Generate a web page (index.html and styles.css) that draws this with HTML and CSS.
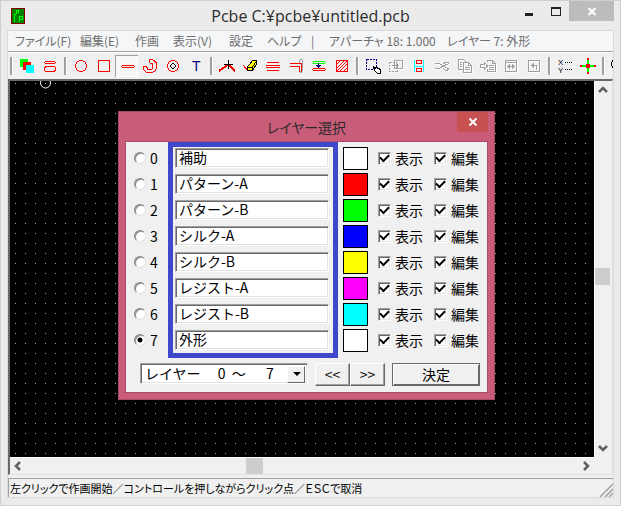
FILE: index.html
```
<!DOCTYPE html>
<html lang="ja">
<head>
<meta charset="utf-8">
<title>Pcbe C:¥pcbe¥untitled.pcb</title>
<link rel="stylesheet" href="styles.css">
</head>
<body>
<div class="window">
  <header class="titlebar">
    <svg class="app-icon" width="14" height="16" viewBox="0 0 14 16" shape-rendering="crispEdges"><rect width="14" height="16" fill="#800000"/><rect x="1" y="1" width="12" height="14" fill="#008000"/><path d="M3.500 14V6.500M3 6.500h2M5.500 6V3M5 2.500h3M7.500 2v3M8.500 14V8M8 8.500h4M11.500 8v3M8 11.500h4" fill="none" stroke="#0f0"/></svg>
    <h1 class="title">Pcbe C:¥pcbe¥untitled.pcb</h1>
    <div class="caption">
      <button class="cap" aria-label="最小化"><svg width="12" height="20" viewBox="0 0 12 20"><path d="M2 12h8v3H2z" fill="#222"/></svg></button>
      <button class="cap" aria-label="最大化"><svg width="12" height="20" viewBox="0 0 12 20"><path d="M1 6h10v9H1zM2 8v6h8V8z" fill="#222" fill-rule="evenodd"/></svg></button>
      <button class="cap cap-close" aria-label="閉じる"><svg width="12" height="20" viewBox="0 0 12 20"><path d="M2.500 7l7 7M9.500 7l-7 7" stroke="#fff" stroke-width="2"/></svg></button>
    </div>
  </header>
  <div class="client">
    <nav class="menu">
      <button>ファイル(F)</button><button>編集(E)</button><button>作画</button><button>表示(V)</button><button>設定</button><button>ヘルプ</button><span>|</span><span>アパーチャ 18: 1.000</span><span>レイヤー 7: 外形</span>
    </nav>
    <div class="toolbar">
      <i class="sep"></i>
      <button aria-label="レイヤー"><svg viewBox="0 0 23 22"><path d="M5 4h8v8H5z" fill="#0f0"/><path d="M8 7h8v8H8z" fill="red"/><path d="M11 10h8v8h-8z" fill="#0ff"/></svg></button>
      <button aria-label="アパーチャ"><svg viewBox="0 0 23 22"><g class="r"><path d="M7 6.500h10M7 8.500h10M6 7.500h1M17 7.500h1"/><rect x="6.500" y="11.500" width="11" height="5" rx="2.500"/></g></svg></button>
      <i class="sep"></i>
      <button aria-label="円"><svg viewBox="0 0 23 22"><circle class="r" cx="12" cy="11" r="5.500"/></svg></button>
      <button aria-label="四角"><svg viewBox="0 0 23 22"><rect class="r" x="6.500" y="5.500" width="11" height="11"/></svg></button>
      <button class="pressed" aria-label="線" aria-pressed="true"><svg viewBox="0 0 23 22"><path class="r" d="M7 10.500h12M7 12.500h12M6 11.500h1M19 11.500h1"/></svg></button>
      <button aria-label="円弧"><svg viewBox="0 0 23 22"><path class="r" d="M12.500 4.500c4 0 6.500 3 6.500 6.500s-3 7-7 7-6.500-2.500-6.500-5.500c0-2 3.500-2 3.500 0 0 1.500 1 2.500 2.500 2.500 2 0 3.500-1.500 3.500-3.500 0-2-1-3.500-2.500-3.500-2 0-2-3.500 0-3.500z"/></svg></button>
      <button aria-label="パッド"><svg viewBox="0 0 23 22"><circle class="r" cx="12" cy="11" r="5.500"/><path d="M12 8l3 3-3 3-3-3z" fill="none" stroke="#000"/></svg></button>
      <button aria-label="文字"><svg viewBox="0 0 23 22"><text x="8" y="16" font-size="14" fill="navy">T</text></svg></button>
      <i class="sep"></i>
      <button aria-label="頂点"><svg viewBox="0 0 23 22"><path class="r w" d="M4 16l9-6.500 7 6.500"/><path d="M9 9.500h9M13.500 5v9" stroke="#000"/></svg></button>
      <button aria-label="消しゴム"><svg viewBox="0 0 23 22"><path class="r" d="M5 10l5 6"/><path d="M9.500 12l5-6.500h4v3.500l-4 6.500h-5z" fill="#ff0" stroke="#000"/><path d="M9.500 12h5v3.500M14.500 12l4-6" fill="none" stroke="#000"/></svg></button>
      <button aria-label="平行線"><svg viewBox="0 0 23 22"><path class="r" d="M6 7.500h12M5 10.500h14M5 12.500h14M6 15.500h12"/></svg></button>
      <button aria-label="結合"><svg viewBox="0 0 23 22"><path d="M15.500 9V6l1-2h1l1 2v9l-1 2h-1l-1-2" fill="none" stroke="#a0a0a0"/><path class="r" d="M6 8.500h11M6 11.500h9.500V17M17.500 8v9"/></svg></button>
      <button aria-label="移動"><svg viewBox="0 0 23 22"><path d="M6 6.500h12M5 7.500h1M18 7.500h1M6 8.500h12" stroke="#0f0"/><path class="r" d="M6 13.500h12M5 14.500h1M18 14.500h1M6 15.500h12"/><path d="M11.500 8v4" stroke="navy"/><path d="M9 10h5l-2.500 3z" fill="navy"/></svg></button>
      <button aria-label="塗りつぶし"><svg viewBox="0 0 23 22"><path class="r" d="M6.500 5.500h11v11h-11zM7 9l3-3M7 13l7-7M7 16L17 6M10 16l7-7M14 16l3-3"/></svg></button>
      <i class="sep"></i>
      <button aria-label="選択"><svg viewBox="0 0 23 22"><path d="M5.500 4.500h10v10h-10z" fill="none" stroke="navy" stroke-dasharray="2 1"/><path d="M12.500 11.500l2 2v-1l4 1 1 2v3h-3l-3-3z" fill="#fff" stroke="#000"/></svg></button>
      <button disabled aria-label="複写"><svg viewBox="0 0 23 22"><path d="M10.500 5.500h8v8h-8z"/><path d="M5.500 7.500h8v9h-8z" stroke-dasharray="2 1"/><path d="M8 10.500h7M12.500 8v5M13.500 9v3"/></svg></button>
      <button aria-label="反転"><svg viewBox="0 0 23 22"><path d="M7.500 5v12M16.500 5v12M7 11.500h10" stroke="#0ff"/><path class="r" d="M9.500 5.500h5v3h-5zM9.500 13.500h5v3h-5z"/></svg></button>
      <button disabled aria-label="切り取り"><svg viewBox="0 0 23 22"><path d="M5 8.500h4l7 4M5 13.500h4l7-4M13.500 8.500l2-1h3v1l-3 2M13.500 13.500l2 2h2l1-2-3-1"/></svg></button>
      <button disabled aria-label="コピー"><svg viewBox="0 0 23 22"><path d="M10.500 14.500h-5v-10h5l3 3M10.500 7.500h5l3 3v7h-8zM15.500 7.500v3h3M7 7.500h2M7 9.500h2M12 12.500h5M12 14.500h5M7 11.500h2"/></svg></button>
      <button disabled aria-label="貼り付け"><svg viewBox="0 0 23 22"><path d="M4.500 9.500h4v-2l3 3.500-3 3.500v-2h-4zM11.500 7V5.500h5l3 3v8h-8V14M16.500 5.500v3h3M13 10.500h5M13 12.500h5M13 14.500h5"/></svg></button>
      <button disabled aria-label="左右"><svg viewBox="0 0 23 22"><path d="M6.500 5.500h11v11h-11zM6 7.500h12M8 11.500h8M9.500 10v3M14.500 10v3M10.500 9v5M13.500 9v5"/></svg></button>
      <button disabled aria-label="元に戻す"><svg viewBox="0 0 23 22"><path d="M6.500 5.500h11v11h-11zM9 10.500h5.500V15M9.500 10v1M10.500 9v3M11.500 8v5"/></svg></button>
      <i class="sep"></i>
      <button aria-label="座標"><svg viewBox="0 0 23 22"><text x="5" y="10" font-size="8">X</text><text x="5" y="18" font-size="8">Y</text><path d="M12 7.500h7M12 14.500h7" stroke="#000" stroke-dasharray="1 1"/></svg></button>
      <button aria-label="原点"><svg viewBox="0 0 23 22"><path d="M4 11h16M12 3v16" stroke="#0f0" stroke-width="2"/><path d="M4 10h2v2H4zM18 10h2v2h-2zM11 3h2v2h-2zM11 17h2v2h-2zM10 9h4v4h-4z" fill="red"/></svg></button>
      <i class="sep"></i>
      <button aria-label="拡大"><svg viewBox="0 0 23 22"><circle cx="9" cy="9" r="4.500" fill="none" stroke="#000"/><path d="M12 12l6 6" stroke="#000"/></svg></button>
    </div>
    <main class="view">
      <div class="canvas">
        <svg class="cursor" width="12" height="8" viewBox="0 0 12 8"><circle cx="5.500" cy="2" r="5" fill="none" stroke="#fff"/></svg>
      </div>
      <div class="vscroll">
        <svg width="16" height="17" viewBox="0 0 16 17"><path d="M4 11l4-4 4 4" class="chev"/></svg>
        <i class="before-v"></i><i class="thumb"></i><i class="after-v"></i>
        <svg width="16" height="17" viewBox="0 0 16 17"><path d="M4 6l4 4 4-4" class="chev"/></svg>
      </div>
      <div class="hscroll">
        <svg width="17" height="16" viewBox="0 0 17 16"><path d="M10 4L6 8l4 4" class="chev"/></svg>
        <i class="before-h"></i><i class="thumb"></i><i class="after-h"></i>
        <svg width="17" height="16" viewBox="0 0 17 16"><path d="M7 4l4 4-4 4" class="chev"/></svg>
      </div>
      <form class="dialog" role="dialog" aria-labelledby="dlg-title">
        <div class="dialog-bar">
          <h2 id="dlg-title">レイヤー選択</h2>
          <button type="button" class="dialog-close" aria-label="閉じる"><svg width="10" height="10" viewBox="0 0 10 10"><path d="M1.500 1.500l7 7M8.500 1.500l-7 7" stroke="#fff" stroke-width="2"/></svg></button>
        </div>
        <div class="dialog-body">
          <div class="rows">
            <div class="row"><label class="pick"><input type="radio" name="layer">0</label><input class="name" aria-label="レイヤー 0" value="補助"><button type="button" class="swatch white" aria-label="色 0"></button><label class="tick"><input type="checkbox" checked>表示</label><label class="tick"><input type="checkbox" checked>編集</label></div>
            <div class="row"><label class="pick"><input type="radio" name="layer">1</label><input class="name" aria-label="レイヤー 1" value="パターン-A"><button type="button" class="swatch red" aria-label="色 1"></button><label class="tick"><input type="checkbox" checked>表示</label><label class="tick"><input type="checkbox" checked>編集</label></div>
            <div class="row"><label class="pick"><input type="radio" name="layer">2</label><input class="name" aria-label="レイヤー 2" value="パターン-B"><button type="button" class="swatch green" aria-label="色 2"></button><label class="tick"><input type="checkbox" checked>表示</label><label class="tick"><input type="checkbox" checked>編集</label></div>
            <div class="row"><label class="pick"><input type="radio" name="layer">3</label><input class="name" aria-label="レイヤー 3" value="シルク-A"><button type="button" class="swatch blue" aria-label="色 3"></button><label class="tick"><input type="checkbox" checked>表示</label><label class="tick"><input type="checkbox" checked>編集</label></div>
            <div class="row"><label class="pick"><input type="radio" name="layer">4</label><input class="name" aria-label="レイヤー 4" value="シルク-B"><button type="button" class="swatch yellow" aria-label="色 4"></button><label class="tick"><input type="checkbox" checked>表示</label><label class="tick"><input type="checkbox" checked>編集</label></div>
            <div class="row"><label class="pick"><input type="radio" name="layer">5</label><input class="name" aria-label="レイヤー 5" value="レジスト-A"><button type="button" class="swatch magenta" aria-label="色 5"></button><label class="tick"><input type="checkbox" checked>表示</label><label class="tick"><input type="checkbox" checked>編集</label></div>
            <div class="row"><label class="pick"><input type="radio" name="layer">6</label><input class="name" aria-label="レイヤー 6" value="レジスト-B"><button type="button" class="swatch cyan" aria-label="色 6"></button><label class="tick"><input type="checkbox" checked>表示</label><label class="tick"><input type="checkbox" checked>編集</label></div>
            <div class="row"><label class="pick"><input type="radio" name="layer" checked>7</label><input class="name" aria-label="レイヤー 7" value="外形"><button type="button" class="swatch white" aria-label="色 7"></button><label class="tick"><input type="checkbox" checked>表示</label><label class="tick"><input type="checkbox" checked>編集</label></div>
            <div class="frame"></div>
          </div>
          <div class="actions">
            <div class="combo"><select aria-label="レイヤー範囲"><option>レイヤー　&nbsp;0&nbsp;&nbsp;～　&nbsp;&nbsp;7</option></select></div>
            <div class="pager"><button type="button" class="btn">&lt;&lt;</button><button type="button" class="btn">&gt;&gt;</button></div>
            <button type="button" class="btn ok">決定</button>
          </div>
        </div>
      </form>
    </main>
    <footer class="status"><span>左クリックで作画開始／コントロールを押しながらクリック点／ＥＳＣで取消</span>
      <svg class="grip" width="14" height="14" viewBox="0 0 14 14"><path d="M1 14L14 1M6 14l8-8M10 14l4-4" stroke="#a0a0a0" stroke-width="1.500"/></svg>
    </footer>
  </div>
</div>
</body>
</html>
```
FILE: styles.css
```
* { box-sizing: border-box; }
body { margin: 0; font: 12px/16px "Noto Sans CJK JP", sans-serif; color: #000; }
button, input, select { font: inherit; color: inherit; margin: 0; padding: 0; border: 0; border-radius: 0; background: none; }
svg { display: block; }

/* Window frame and title bar */
.window { height: 100vh; display: flex; flex-direction: column; padding: 0 6px 7px; background: #ebebeb; border: 1px solid #cfcfcf; overflow: hidden; }
.titlebar { height: 29px; flex: none; display: grid; grid-template-columns: 120px 1fr 120px; align-items: center; }
.app-icon { margin: 0 4px; }
.title { margin: 0; text-align: center; font: 16px/24px "Open Sans", "Noto Sans CJK JP", sans-serif; color: #2b2b2b; white-space: nowrap; }
.caption { display: flex; justify-content: flex-end; align-self: start; height: 20px; }
.cap { width: 27px; display: flex; justify-content: center; flex: none; }
.cap-close { width: 45px; background: #bcbcbc; }

.client { flex: 1; min-height: 0; display: flex; flex-direction: column; border: 1px solid #d9d9d9; background: #f0f0f0; }

/* Menu and toolbar */
.menu { height: 20px; flex: none; display: grid; grid-template-columns: 65px 55px 38px 56px 38px 44px 18px 118px 1fr; align-items: center; padding-left: 7px; background: #f5f6f7; color: #6d6d6d; font-feature-settings: "palt"; white-space: nowrap; }
.menu button { text-align: left; }
.toolbar { height: 28px; flex: none; display: flex; align-items: center; overflow: hidden; border-top: 1px solid #a0a0a0; box-shadow: inset 0 1px #fff; padding-top: 1px; }
.toolbar button { width: 23px; height: 22px; flex: none; }
.toolbar svg { width: 23px; height: 22px; fill: #000; font-family: "Liberation Sans", sans-serif; shape-rendering: crispEdges; }
.toolbar .pressed { background: #f7f7f7; box-shadow: inset 1px 1px #a0a0a0, inset -1px -1px #fff; }
.toolbar [disabled] svg { fill: none; stroke: #a0a0a0; filter: drop-shadow(1px 1px #fff); }
.toolbar .r { fill: none; stroke: red; }
.toolbar .w { stroke-width: 2; }
.sep { width: 8px; height: 18px; flex: none; display: flex; justify-content: center; }
.toolbar .sep:first-child { margin-left: -1px; }
.sep::before { content: ""; width: 2px; background: #a0a0a0; border-right: 1px solid #fff; }

/* Drawing area */
.view { position: relative; flex: 1; min-height: 0; display: grid; grid-template-columns: 1fr 18px; grid-template-rows: 1fr 17px; border-top: 2px solid #696969; border-left: 2px solid #696969; border-right: 1px solid #e3e3e3; border-bottom: 1px solid #e3e3e3; }
.canvas { background: #000 url("data:image/svg+xml,%3Csvg xmlns='http://www.w3.org/2000/svg' width='10' height='10'%3E%3Cpath d='M5 2h1v1H5z' fill='%23a0a0a0'/%3E%3C/svg%3E"); }
.cursor { margin-left: 30px; }
.vscroll { display: flex; flex-direction: column; border-left: 1px solid #fff; }
.hscroll { display: flex; border-top: 1px solid #fff; }
.thumb { flex: 0 0 17px; background: #cdcdcd; }
.vscroll .thumb { margin-right: 2px; }
.before-v { flex: 171; }
.after-v { flex: 155; }
.before-h { flex: 219; }
.after-h { flex: 314; }
.chev { fill: none; stroke: #606060; stroke-width: 2.500; }

.status { height: 19px; flex: none; margin-top: 3px; display: flex; justify-content: space-between; align-items: center; border-top: 1px solid #a0a0a0; border-left: 1px solid #a0a0a0; padding-left: 1px; white-space: nowrap; font-size: 11px; font-feature-settings: "palt"; }
.grip { align-self: flex-end; }

/* Layer dialog */
.dialog { position: absolute; left: 108px; top: 30px; padding: 0 6px 6px; background: #c95d79; border: 1px solid #a94c65; font-size: 14px; line-height: 18px; }
.dialog-bar { height: 29px; display: flex; justify-content: center; position: relative; }
.dialog-bar h2 { margin: 0; padding-top: 5px; font: 14px/20px "Noto Sans CJK JP", sans-serif; font-feature-settings: "palt"; color: #2b2b2b; }
.dialog-close { position: absolute; right: 0; top: 0; width: 31px; height: 20px; background: #c75050; display: flex; align-items: center; justify-content: center; }
.dialog-body { border: 1px solid #a94c65; background: #f0f0f0; padding: 0 7px 6px 8px; }
.rows { position: relative; padding-top: 3px; }
.row { display: grid; grid-template-columns: 41px 154px 49px 56px 46px; height: 26px; align-items: center; }
.frame { position: absolute; left: 34px; top: 0; width: 170px; height: 216px; border: 5px solid #3f48cc; pointer-events: none; }
.pick, .tick { display: flex; align-items: center; gap: 4px; }
.pick input { appearance: none; width: 12px; height: 12px; border-radius: 50%; background: #fff; border: 1px solid; border-color: #808080 #e3e3e3 #e3e3e3 #808080; box-shadow: inset 1px 1px #909090; }
.pick input:checked { background: radial-gradient(circle, #000 0 2px, #fff 3px); }
.name { height: 20px; width: 100%; background: #fff; border: 1px solid; border-color: #a0a0a0 #fff #fff #a0a0a0; box-shadow: inset 1px 1px #696969, inset -1px -1px #e3e3e3; padding: 0 3px 2px; }
.swatch { width: 25px; height: 23px; border: 1px solid #000; margin-left: 14px; }
.white { background: #fff; }
.red { background: #f00; }
.green { background: #0f0; }
.blue { background: #00f; }
.yellow { background: #ff0; }
.magenta { background: #f0f; }
.cyan { background: #0ff; }
.tick input { appearance: none; width: 13px; height: 13px; border: 1px solid; border-color: #a0a0a0 #fff #fff #a0a0a0; box-shadow: inset 1px 1px #696969, inset -1px -1px #e3e3e3; background: #fff; display: grid; place-items: center; }
.tick input:checked::before { content: ""; width: 7px; height: 4px; border: solid #000; border-width: 0 0 2px 2px; transform: translateY(-1px) rotate(-45deg); }
.actions { display: flex; padding: 10px 0 0 6px; }
.combo { position: relative; width: 168px; height: 21px; background: #fff; border: 1px solid; border-color: #a0a0a0 #fff #fff #a0a0a0; box-shadow: inset 1px 1px #696969, inset -1px -1px #e3e3e3; }
.combo select { appearance: none; width: 100%; height: 19px; padding: 0 4px 2px; }
.combo::before { content: ""; position: absolute; right: 2px; top: 2px; width: 16px; height: 15px; background: #f0f0f0; border: 1px solid; border-color: #fff #696969 #696969 #fff; pointer-events: none; }
.combo::after { content: ""; position: absolute; right: 6px; top: 8px; border: 4px solid transparent; border-top-color: #000; border-bottom: 0; pointer-events: none; }
.pager { display: flex; margin: 0 7px; }
.btn { width: 35px; height: 23px; background: #f0f0f0; border: 1px solid; border-color: #fff #696969 #696969 #fff; box-shadow: inset -1px -1px #a0a0a0; text-align: center; padding-bottom: 2px; }
.ok { width: 88px; border-color: #696969; box-shadow: inset 1px 1px #fff, inset -1px -1px #696969; }
```
